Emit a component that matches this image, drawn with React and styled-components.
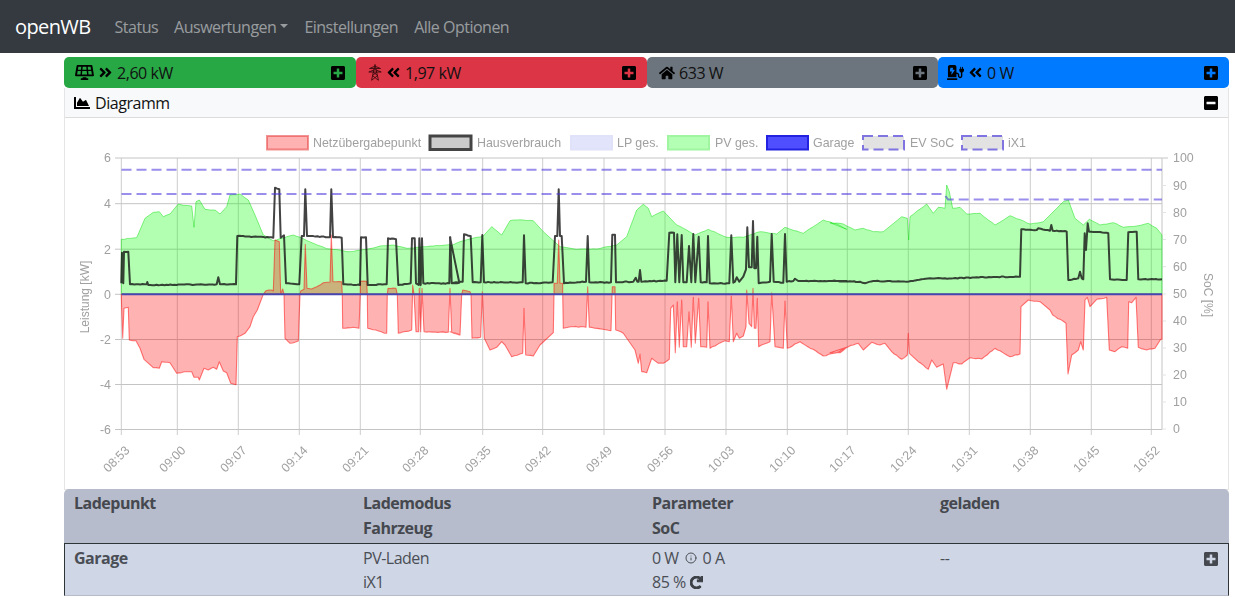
import React from "react";
import styled, { createGlobalStyle } from "styled-components";
import {
  FaSolarPanel, FaAngleDoubleRight, FaAngleDoubleLeft, FaHome, FaPlusSquare, FaMinusSquare,
  FaChartArea, FaChargingStation, FaRedo,
} from "react-icons/fa";
import { FiInfo } from "react-icons/fi";

const Global = createGlobalStyle`
  html, body { margin: 0; padding: 0; background: #fff; }
  body { font-family: "Open Sans", "Noto Sans", "Liberation Sans", sans-serif; font-size: 16px; letter-spacing: -.45px; color: #212529; overflow: hidden; }
`;

const Page = styled.div`width: 1235px; height: 598px; overflow: hidden;`;
const Navbar = styled.nav`
  height: 53px; background: #343a40; display: flex; align-items: center; padding: 0 15px; box-sizing: border-box;
`;
const Brand = styled.span`color: #fff; font-size: 20px; letter-spacing: -.6px; margin-right: 24px;`;
const NavLink = styled.span`
  color: rgba(255,255,255,.5); font-size: 16px; letter-spacing: -.5px; margin-right: ${p => p.$gap}px; display: flex; align-items: center;
`;
const Caret = styled.i`
  display: inline-block; margin-left: 4px; margin-top: -2px; border-top: 4.5px solid currentColor; border-left: 4.5px solid transparent; border-right: 4.5px solid transparent;
`;
const Main = styled.main`margin: 0 6px 0 64px; padding-top: 4px;`;
const Tiles = styled.div`display: grid; grid-template-columns: 292px 291px 291px 291px; height: 31px;`;
const Tile = styled.div`
  background: ${p => p.$bg}; border-radius: 5px; display: flex; align-items: center; gap: 4px; padding: 0 10px 0 ${p => p.$pad}px; color: #111; font-size: 16px;
`;
const TileIcon = styled.span`display: flex; font-size: ${p => p.$size || 16}px; color: ${p => p.$color || "#000"};`;
const Toggle = styled.span`margin-left: auto; display: flex; font-size: 16px; color: ${p => p.$color || "#000"};`;
const ChartCard = styled.section`
  border: 1px solid rgba(0,0,0,.1); border-top: 0; height: 401px; box-sizing: content-box; margin-bottom: -1px;
`;
const ChartHeader = styled.header`
  height: 28px; padding: 1px 9px 0; box-sizing: content-box; margin-bottom: -1px; background: #f8f9fa; border-bottom: 1px solid #dcdcdc; display: flex; align-items: center; gap: 5px; font-size: 16px; color: #111;
`;
const ChartSvg = styled.svg`display: block; position: relative; left: -65px; width: 1235px; height: 372px; overflow: visible; filter: blur(.3px);`;
const TableHead = styled.div`
  display: grid; grid-template-columns: 289px 289px 288px 1fr; background: #b6bccb; border-radius: 5px 5px 0 0; padding: 2px 10px 3px; height: 54px; box-sizing: border-box;
  font-weight: 700; color: #45484e; font-size: 16px; letter-spacing: -.5px; line-height: 24.5px;
`;
const TableRow = styled.div`
  display: grid; grid-template-columns: 289px 289px 288px 1fr; background: #cfd6e6; height: 53px; box-sizing: border-box; padding: 2px 9px 0; position: relative;
  border: 1px solid #2f3438; border-bottom: 1px solid #b6bbc7; color: #4a4e55; font-size: 16px; letter-spacing: -.5px; line-height: 24px;
`;
const Name = styled.div`font-weight: 700;`;
const RowLine = styled.div`display: flex; align-items: center; gap: ${p => p.$gap}px;`;
const RowToggle = styled.span`position: absolute; right: 9px; top: 7px; display: flex; font-size: 16px; color: #45484e;`;
const Refresh = styled(FaRedo)`stroke: currentColor; stroke-width: 40px; color: #3c4046;`;

const X0 = 121.5, X1 = 1162, Y0 = 294.3;
const conv = (ox, oy, s) => s.trim().split(/\s+/).map(p => { const [x, y] = p.split(",").map(Number); return [ox + x / 3, oy + y / 3]; });
const noise = i => { const v = Math.sin(i * 12.9898) * 43758.5453; return v - Math.floor(v) - .5; };
const densify = (pts, amp, step) => {
  const out = []; let n = 0;
  pts.forEach((p, i) => {
    out.push(p);
    const q = pts[i + 1];
    if (!q) return;
    const dx = q[0] - p[0], dy = q[1] - p[1];
    if (dx > step * 1.5 && Math.abs(dy) < dx * .8) {
      const c = Math.floor(dx / step);
      for (let k = 1; k < c; k++) out.push([p[0] + dx * k / c, p[1] + dy * k / c + noise(++n) * amp * 2]);
    }
  });
  return out;
};
const d = pts => pts.map((p, i) => `${i ? "L" : "M"}${p[0].toFixed(1)} ${p[1].toFixed(1)}`).join("");
const area = pts => `${d(pts)}L${pts[pts.length - 1][0].toFixed(1)} ${Y0}L${pts[0][0].toFixed(1)} ${Y0}Z`;

const pv = densify([
  ...conv(60, 150, "184,268 230,263 255,205 280,187 298,185 310,200 330,192 355,162 370,166 395,168 402,232 408,155 418,150 435,178 450,180 465,180 480,192 500,170 510,135 540,132 565,150 585,195 610,255 640,272 680,260 700,255 720,262 760,280 800,296 870,305 920,298 960,288 1000,285 1040,295 1100,290 1170,284"),
  ...conv(450, 150, "0,287 40,272 100,258 125,230 155,255 180,212 200,210 250,212 280,245 330,290 380,298 440,297 500,285 530,260 560,180 580,163 595,175 605,200 640,183 680,225 710,240 735,255 775,238 830,262 880,262 930,245 980,252 1005,232 1060,250 1120,210 1160,222 1190,238"),
  ...conv(830, 150, "0,218 40,222 75,240 100,235 130,245 160,245 215,200 232,205 236,270 240,200 290,162 310,190 325,172 345,175 350,105 358,125 368,175 390,172 410,192 450,190 495,225 540,197 600,222 640,215 700,155 715,150 735,205 760,225 778,208 810,225 850,218 880,232 920,228 955,220 980,235 996,255"),
], .35, 3);
const house = densify([
  ...conv(60, 150, "184,400 186,308 190,400 192,305 205,305 210,403 260,403 262,396 265,405 470,403 475,382 480,403 528,403 532,258 640,263 645,113 658,118 662,263 672,256 678,400 718,403 725,258 732,258 736,118 741,258 810,262 814,118 819,262 845,263 850,403 900,405 903,262 918,262 923,405 980,403 984,265 1008,268 1015,405 1052,400 1056,265 1064,265 1068,400 1076,405 1078,265 1082,405 1086,265 1090,400 1168,400 1171,262 1175,400 1198,398"),
  ...conv(450, 150, "0,262 5,400 38,395 42,253 62,258 68,397 92,397 97,255 102,397 218,397 222,256 227,400 308,397 315,258 322,258 326,118 330,258 335,258 342,400 408,395 413,258 418,397 483,397 487,254 495,254 498,397 550,395 557,383 562,395 566,395 570,360 574,395 650,392 658,248 672,248 676,397 682,253 688,397 695,255 700,397 710,397 717,288 724,397 730,252 736,397 746,260 752,397 770,397 774,258 779,400 838,400 844,256 850,398 855,395 860,382 868,395 880,380 888,358 892,232 897,352 905,352 909,213 913,355 918,355 922,260 926,400 960,395 965,252 971,395 1000,398 1005,252 1010,395 1030,393 1035,386 1045,393 1190,393"),
  ...conv(830, 150, "0,393 90,395 105,400 130,393 230,395 300,385 370,385 440,382 570,380 574,238 620,240 625,235 660,242 664,225 668,242 705,243 710,245 715,390 745,385 750,365 755,385 760,388 764,250 768,300 773,220 777,245 830,248 835,250 840,388 890,390 895,247 920,245 925,388 960,388 996,388"),
], .4, 2);
const grid = densify([
  ...conv(60, 290, "184,13 185,60 188,145 192,55 205,52 208,150 228,152 240,175 252,208 280,233 298,235 305,215 330,218 350,250 380,245 395,245 402,262 415,262 418,270 432,235 445,240 460,232 470,238 478,215 490,243 500,248 512,280 528,284 532,140 555,130 570,110 580,80 592,60 610,13 618,2 635,0 640,3 645,-150 658,-145 662,13 668,-3 672,13 675,145 690,160 715,153 720,13 722,3 732,-2 736,-137 741,-5 755,-3 770,-10 790,-22 810,-24 814,-165 819,-25 845,-25 847,13 848,115 880,112 897,115 901,13 901,-26 920,-26 922,13 923,115 980,130 982,13 984,-5 1008,-5 1012,13 1015,130 1055,120 1058,-15 1062,13 1068,125 1076,125 1078,-5 1082,125 1086,-5 1092,125 1165,127 1170,-5 1175,127 1198,135"),
  ...conv(450, 290, "0,125 30,135 35,13 38,0 60,5 63,13 66,145 92,142 97,5 103,145 120,180 140,172 155,155 165,165 185,200 210,192 218,190 222,55 227,195 250,198 270,165 310,128 312,13 312,-20 322,-20 326,-150 330,-20 338,-20 338,13 340,115 370,110 408,112 413,-10 418,112 483,122 487,-10 495,-10 497,120 520,130 555,180 565,220 570,192 575,245 590,248 605,205 625,220 640,220 658,208 662,55 670,45 676,188 682,35 688,172 695,30 700,170 710,170 717,65 724,172 730,22 736,160 746,25 752,170 770,172 774,35 780,175 825,152 838,155 844,18 850,155 860,130 868,145 880,138 888,110 890,0 897,100 905,110 909,-5 913,115 918,115 922,25 926,170 960,155 965,8 975,170 1000,175 1005,33 1012,175 1050,155 1120,198 1160,188 1190,172"),
  ...conv(830, 290, "0,188 30,188 55,170 85,160 100,180 125,157 150,165 165,160 185,185 215,208 232,195 235,130 238,190 265,215 295,238 305,210 320,232 340,222 350,298 370,218 395,222 420,203 455,207 495,175 540,200 570,192 573,50 595,30 630,35 660,60 668,75 708,100 714,252 725,195 745,180 752,155 760,180 765,30 772,22 780,50 800,28 830,22 838,180 855,185 875,170 893,175 896,35 905,38 918,22 925,172 950,180 975,175 992,148 996,148"),
], .45, 2.5);

const vx = [121.3, 177.3, 238.3, 299.3, 360.3, 420.3, 482.7, 542.7, 604, 665, 726, 787.3, 847.3, 908.3, 969.3, 1030.3, 1091.3, 1151.3];
const times = ["08:53","09:00","09:07","09:14","09:21","09:28","09:35","09:42","09:49","09:56","10:03","10:10","10:17","10:24","10:31","10:38","10:45","10:52"];
const hy = [[158,"6"],[203.7,"4"],[249.2,"2"],[294.3,"0"],[339.5,"-2"],[384.5,"-4"],[429.5,"-6"]];
const soc = [[158,"100"],[185.5,"90"],[212.5,"80"],[239.5,"70"],[266.7,"60"],[294,"50"],[321,"40"],[348,"30"],[375,"20"],[402,"10"],[429,"0"]];

const legend = [
  { x: 267, tx: 313, label: "Netzübergabepunkt", fill: "rgba(255,0,0,.3)", stroke: "rgba(230,60,60,.55)", sw: 2 },
  { x: 430, tx: 477, label: "Hausverbrauch", fill: "#cbcbcb", stroke: "#444", sw: 3 },
  { x: 571, tx: 617, label: "LP ges.", fill: "#e2e4fb", stroke: "#e0e2fa", sw: 2 },
  { x: 668, tx: 715, label: "PV ges.", fill: "#b3ffb3", stroke: "#a0f5a0", sw: 2 },
  { x: 767, tx: 813, label: "Garage", fill: "#4f4fff", stroke: "#2222e0", sw: 2 },
  { x: 863, tx: 910, label: "EV SoC", fill: "#e2e2e2", stroke: "#7f74e0", sw: 2, dash: "10 5" },
  { x: 962, tx: 1008, label: "iX1", fill: "#e2e2e2", stroke: "#7f74e0", sw: 2, dash: "10 5" },
];

const Label = styled.text`font-family: "Liberation Sans", Arial, sans-serif; letter-spacing: 0; font-size: ${p => p.$size || 12.4}px; fill: #a0a0a0;`;

function Tower() {
  return (
    <svg width="14" height="17" viewBox="0 0 14 17" fill="none" stroke="#3c0c10" strokeWidth=".9">
      <path d="M7 .5 L3.5 16.5 M7 .5 L10.5 16.5 M1.5 4.5 L7 2.2 L12.5 4.5 Z M.8 8 L7 5.6 L13.2 8 Z M5 8 L9.6 11.5 L4 16 M9 8 L4.4 11.5 L10 16" />
    </svg>
  );
}

function Chart() {
  const top = 117;
  return (
    <ChartSvg viewBox={`0 ${top} 1235 372`}>
      {legend.map(l => (
        <g key={l.label}>
          <rect x={l.x} y={136} width={41} height={13.5} fill={l.fill} stroke={l.stroke} strokeWidth={l.sw} strokeDasharray={l.dash} />
          <Label x={l.tx} y={146.5}>{l.label}</Label>
        </g>
      ))}
      <g stroke="#cdcdcd" strokeWidth="1">
        {vx.map(x => <line key={x} x1={x} x2={x} y1={158} y2={435} />)}
      </g>
      <g stroke="#c4c4c4" strokeWidth="1">
        {hy.map(([y]) => <line key={y} x1={115} x2={X1} y1={y} y2={y} />)}
        <line x1={X1} x2={X1} y1={158} y2={429.5} />
        <line x1={X1} x2={1168} y1={158} y2={158} />
        {soc.map(([y]) => <line key={y} x1={X1} x2={1166} y1={y} y2={y} stroke="#e3e3e3" />)}
      </g>
      <path d={area(pv)} fill="rgba(0,255,0,.3)" stroke="rgba(0,220,0,.45)" strokeWidth="1" />
      <path d={area(grid)} fill="rgba(255,0,0,.3)" stroke="rgba(255,0,0,.5)" strokeWidth="1.1" strokeLinejoin="round" />
      <path d={d(house)} fill="none" stroke="rgba(20,20,20,.8)" strokeWidth="2" strokeLinejoin="round" />
      <line x1={X0} x2={X1} y1={Y0} y2={Y0} stroke="#4646b0" strokeWidth="2" />
      <g fill="none" stroke="rgba(70,50,220,.55)" strokeWidth="2" strokeDasharray="10 5">
        <line x1={X0} x2={X1} y1={169.7} y2={169.7} />
        <path d="M121.5 194 L944 194 L948 199.5 L1162 199.5" />
      </g>
      {hy.map(([y, t]) => <Label key={t} x={111} y={y + 4.4} textAnchor="end">{t}</Label>)}
      {soc.map(([y, t]) => <Label key={t} x={1173} y={y + 4.2}>{t}</Label>)}
      {times.map((t, i) => (
        <Label key={t} textAnchor="end" transform={`translate(${vx[i] + 9} 451) rotate(-45)`}>{t}</Label>
      ))}
      <Label textAnchor="middle" $size={12} transform="translate(89 297) rotate(-90)">Leistung [kW]</Label>
      <Label textAnchor="middle" $size={12} transform="translate(1204 295) rotate(90)">SoC [%]</Label>
    </ChartSvg>
  );
}

export default function App() {
  return (
    <Page>
      <Global />
      <Navbar>
        <Brand>openWB</Brand>
        <NavLink $gap={16}>Status</NavLink>
        <NavLink $gap={16}>Auswertungen<Caret /></NavLink>
        <NavLink $gap={16}>Einstellungen</NavLink>
        <NavLink $gap={0}>Alle Optionen</NavLink>
      </Navbar>
      <Main>
        <Tiles>
          <Tile $bg="#28a745" $pad={11}>
            <TileIcon $size={19}><FaSolarPanel /></TileIcon>
            <TileIcon $size={15}><FaAngleDoubleRight /></TileIcon>
            <span>2,60 kW</span>
            <Toggle><FaPlusSquare /></Toggle>
          </Tile>
          <Tile $bg="#dc3545" $pad={12}>
            <TileIcon><Tower /></TileIcon>
            <TileIcon $size={15}><FaAngleDoubleLeft /></TileIcon>
            <span>1,97 kW</span>
            <Toggle><FaPlusSquare /></Toggle>
          </Tile>
          <Tile $bg="#6c757d" $pad={12}>
            <TileIcon $size={16}><FaHome /></TileIcon>
            <span>633 W</span>
            <Toggle><FaPlusSquare /></Toggle>
          </Tile>
          <Tile $bg="#007bff" $pad={9}>
            <TileIcon $size={17}><FaChargingStation /></TileIcon>
            <TileIcon $size={15}><FaAngleDoubleLeft /></TileIcon>
            <span>0 W</span>
            <Toggle><FaPlusSquare /></Toggle>
          </Tile>
        </Tiles>
        <ChartCard>
          <ChartHeader>
            <TileIcon $size={16}><FaChartArea /></TileIcon>
            <span>Diagramm</span>
            <Toggle><FaMinusSquare /></Toggle>
          </ChartHeader>
          <Chart />
        </ChartCard>
        <TableHead>
          <div>Ladepunkt</div>
          <div>Lademodus<br />Fahrzeug</div>
          <div>Parameter<br />SoC</div>
          <div>geladen</div>
        </TableHead>
        <TableRow>
          <Name>Garage</Name>
          <div>PV-Laden<br />iX1</div>
          <div>
            <RowLine $gap={6}>0 W <FiInfo size={12} /> 0 A</RowLine>
            <RowLine $gap={4}>85 % <Refresh size={13} /></RowLine>
          </div>
          <div>--</div>
          <RowToggle><FaPlusSquare /></RowToggle>
        </TableRow>
      </Main>
    </Page>
  );
}
